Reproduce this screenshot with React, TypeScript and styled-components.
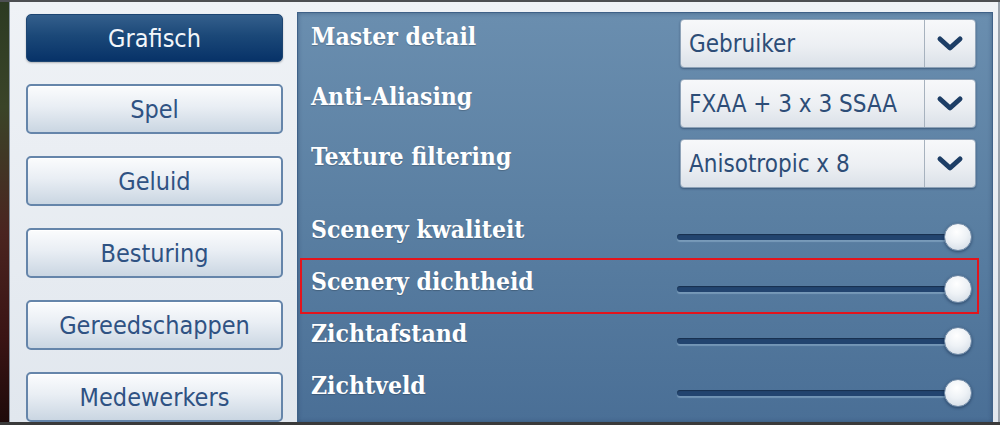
import React from "react";
import styled, { createGlobalStyle, css } from "styled-components";

const GlobalStyle = createGlobalStyle`
  html, body {
    margin: 0;
    padding: 0;
    background: #1c1c1c;
  }
  * {
    box-sizing: border-box;
  }
`;

const tabs = ["Grafisch", "Spel", "Geluid", "Besturing", "Gereedschappen", "Medewerkers"];

const selects = [
  { label: "Master detail", value: "Gebruiker" },
  { label: "Anti-Aliasing", value: "FXAA + 3 x 3 SSAA" },
  { label: "Texture filtering", value: "Anisotropic x 8" },
];

const sliders = [
  { label: "Scenery kwaliteit", value: 100 },
  { label: "Scenery dichtheid", value: 100, highlight: true },
  { label: "Zichtafstand", value: 100 },
  { label: "Zichtveld", value: 100 },
];

const Chevron = () => (
  <svg width="28" height="18" viewBox="0 0 28 18">
    <path
      d="M4 4 L14 13 L24 4"
      fill="none"
      stroke="#1d3e66"
      strokeWidth="5"
      strokeLinecap="round"
      strokeLinejoin="round"
    />
  </svg>
);

export default function App() {
  return (
    <>
      <GlobalStyle />
      <Screen>
        <Backdrop />
        <Frame>
          <Sidebar>
            {tabs.map((t, i) => (
              <TabButton key={t} $active={i === 0}>
                {t}
              </TabButton>
            ))}
          </Sidebar>
          <Settings>
            {selects.map((s) => (
              <SelectRow key={s.label}>
                <Label>{s.label}</Label>
                <Dropdown>
                  <DropdownValue>{s.value}</DropdownValue>
                  <DropdownArrow>
                    <Chevron />
                  </DropdownArrow>
                </Dropdown>
              </SelectRow>
            ))}
            <SliderList>
              {sliders.map((s) => (
                <SliderRow key={s.label} $highlight={!!s.highlight}>
                  <SliderLabel>{s.label}</SliderLabel>
                  <Slider>
                    <Track />
                    <Thumb style={{ left: `calc(${s.value}% - 28px)` }} />
                  </Slider>
                </SliderRow>
              ))}
            </SliderList>
          </Settings>
        </Frame>
      </Screen>
    </>
  );
}

const Screen = styled.div`
  width: 1000px;
  height: 425px;
  display: flex;
  overflow: hidden;
  border-top: 2px solid #4d4f52;
  border-bottom: 3px solid #3a3a3a;
`;

const Backdrop = styled.div`
  width: 10px;
  flex-shrink: 0;
  background: linear-gradient(180deg, #2c3a22 0%, #3a4428 25%, #4a2420 55%, #3a1414 80%, #1e0a0a 100%);
  border-right: 1px solid #8a96a2;
`;

const Frame = styled.div`
  flex: 1;
  display: flex;
  background: linear-gradient(180deg, #eff2f6 0%, #e1e7ee 100%);
  padding: 10px 5px 0 0;
  border-right: 2px solid #9aa3ad;
`;

const Sidebar = styled.div`
  width: 287px;
  flex-shrink: 0;
  display: flex;
  flex-direction: column;
  gap: 22px;
  padding: 0 14px 0 16px;
`;

const TabButton = styled.div<{ $active: boolean }>`
  height: 50px;
  flex-shrink: 0;
  display: flex;
  align-items: center;
  justify-content: center;
  border-radius: 5px;
  font-family: "DejaVu Sans Condensed", "DejaVu Sans", sans-serif;
  font-size: 25px;
  color: #2f5283;
  border: 2px solid #6585aa;
  background: linear-gradient(180deg, #fbfcfd 0%, #e9eef4 45%, #cad6e2 100%);
  box-shadow: inset 0 1px 0 #ffffff;
  ${(p) =>
    p.$active &&
    css`
      height: 48px;
      margin-top: 2px;
      color: #f2f6fa;
      border: 1px solid #1d4572;
      background: linear-gradient(180deg, #345f8c 0%, #1b4878 45%, #073268 100%);
      box-shadow: 0 1px 2px rgba(0, 0, 0, 0.25);
    `}
`;

const Settings = styled.div`
  flex: 1;
  display: flex;
  flex-direction: column;
  padding: 6px 16px 0 13px;
  background: linear-gradient(180deg, #6a8eaf 0%, #5a7fa2 50%, #4a6f96 100%);
  border: 1px solid #3f6188;
  border-bottom: none;
  box-shadow: inset 0 0 4px rgba(20, 45, 80, 0.4);
`;

const SelectRow = styled.div`
  height: 49px;
  margin-bottom: 11px;
  display: flex;
  align-items: flex-start;
  justify-content: space-between;
`;

const Label = styled.div`
  font-family: "DejaVu Serif Condensed", "DejaVu Serif", serif;
  font-weight: bold;
  font-size: 24.5px;
  color: #ffffff;
  line-height: 28px;
  margin-top: 4px;
  white-space: nowrap;
  text-shadow: 0 1px 1px rgba(0, 0, 0, 0.2);
`;

const Dropdown = styled.div`
  width: 296px;
  height: 49px;
  display: flex;
  border-radius: 4px;
  border: 1px solid #8fa3b8;
  background: linear-gradient(180deg, #f7f8fa 0%, #eceff3 55%, #dbe1e8 100%);
  box-shadow: 0 1px 2px rgba(20, 40, 70, 0.45);
  overflow: hidden;
`;

const DropdownValue = styled.div`
  flex: 1;
  display: flex;
  align-items: center;
  padding-left: 8px;
  font-family: "DejaVu Sans Condensed", "DejaVu Sans", sans-serif;
  font-size: 24px;
  color: #2d4d77;
  white-space: nowrap;
`;

const DropdownArrow = styled.div`
  width: 51px;
  display: flex;
  align-items: center;
  justify-content: center;
  border-left: 1px solid #a7b2be;
`;

const SliderList = styled.div`
  display: flex;
  flex-direction: column;
  margin-top: 12px;
`;

const SliderRow = styled.div<{ $highlight: boolean }>`
  position: relative;
  height: 52px;
  display: flex;
  align-items: center;
  justify-content: space-between;
  ${(p) =>
    p.$highlight &&
    css`
      &::after {
        content: "";
        position: absolute;
        left: -11px;
        right: -3px;
        top: -5px;
        bottom: 1px;
        border: 2px solid #e3141c;
        pointer-events: none;
      }
    `}
`;

const SliderLabel = styled(Label)`
  margin-top: 0;
  margin-bottom: 15px;
`;

const Slider = styled.div`
  position: relative;
  width: 295px;
  height: 30px;
  margin-right: 4px;
  display: flex;
  align-items: center;
`;

const Track = styled.div`
  width: 280px;
  height: 6px;
  border-radius: 3px;
  background: #22446f;
  box-shadow: 0 2px 1px rgba(160, 190, 215, 0.45), inset 0 1px 1px rgba(0, 0, 0, 0.3);
`;

const Thumb = styled.div`
  position: absolute;
  top: 1px;
  width: 28px;
  height: 28px;
  border-radius: 50%;
  border: 1px solid #6f88a4;
  background: radial-gradient(circle at 45% 30%, #ffffff 0%, #eef2f6 45%, #cdd7e2 100%);
  box-shadow: 0 1px 3px rgba(10, 30, 60, 0.5);
`;
